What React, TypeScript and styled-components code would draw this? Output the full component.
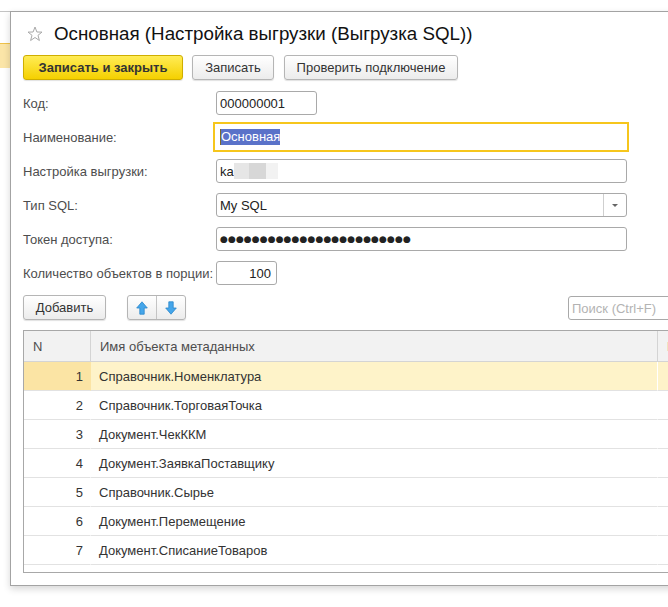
import styled, { createGlobalStyle } from 'styled-components'

const GlobalStyle = createGlobalStyle`
    html, body {
        margin: 0;
        padding: 0;
        background: #ffffff;
        overflow: hidden;
    }
    body {
        width: 668px;
        height: 607px;
        font-family: "Liberation Sans", Arial, sans-serif;
        font-size: 13px;
        color: #333333;
    }
`

const Desktop = styled.div`
    display: flex;
    align-items: flex-start;
    width: 668px;
    height: 607px;
    overflow: hidden;
`

const BackStrip = styled.div`
    flex-shrink: 0;
    width: 10px;
    margin-top: 11px;
    border-top: 1px solid #c4c4c4;
    display: flex;
    flex-direction: column;
`

const BackSpacer = styled.div`
    height: 31px;
`

const BackSelected = styled.div`
    height: 24px;
    background: #fbe5a8;
    border-top: 1px solid #efc24a;
`

const Window = styled.div`
    flex-shrink: 0;
    box-sizing: border-box;
    width: 721px;
    height: 575px;
    margin-top: 11px;
    padding: 0 12px 12px 12px;
    background: #ffffff;
    border: 1px solid #a3a3a3;
    box-shadow: 0 3px 7px rgba(0, 0, 0, 0.16);
    display: flex;
    flex-direction: column;
`

const Header = styled.div`
    height: 43px;
    display: flex;
    align-items: center;
    padding-left: 4px;
    gap: 11px;
`

const Title = styled.h1`
    margin: 0;
    font-size: 18.75px;
    font-weight: normal;
    color: #111111;
    white-space: nowrap;
`

const ButtonBar = styled.div`
    display: flex;
    height: 25px;
    gap: 9px;
`

const Button = styled.button<{ $w: number; $primary?: boolean }>`
    box-sizing: border-box;
    width: ${p => p.$w}px;
    height: 25px;
    padding: 0;
    font-family: inherit;
    font-size: 13px;
    font-weight: ${p => (p.$primary ? 'bold' : 'normal')};
    color: #333333;
    border-radius: 3px;
    border: 1px solid ${p => (p.$primary ? '#cfae00' : '#b5b5b5')};
    background: ${p => (p.$primary
        ? 'linear-gradient(#ffec55, #f5d000)'
        : 'linear-gradient(#ffffff, #ececec)')};
    box-shadow: 0 1px 1px rgba(0, 0, 0, 0.12);
    display: flex;
    align-items: center;
    justify-content: center;
    white-space: nowrap;
`

const Form = styled.div`
    margin-top: 11px;
    display: flex;
    flex-direction: column;
    gap: 10px;
`

const Row = styled.div`
    height: 24px;
    display: flex;
    align-items: center;
`

const Label = styled.span`
    flex-shrink: 0;
    width: 193px;
    color: #4d4d4d;
    white-space: nowrap;
`

const Field = styled.div<{ $w: number; $right?: boolean }>`
    box-sizing: border-box;
    width: ${p => p.$w}px;
    height: 24px;
    border: 1px solid #a9a9a9;
    border-radius: 3px;
    padding: 0 5px 0 3px;
    display: flex;
    align-items: center;
    justify-content: ${p => (p.$right ? 'flex-end' : 'flex-start')};
    color: #222222;
    background: #ffffff;
    overflow: hidden;
`

const FocusedField = styled.div`
    box-sizing: border-box;
    width: 416px;
    height: 30px;
    margin: -3px 0 -3px -3px;
    border: 2px solid #f6c61c;
    padding-left: 5px;
    display: flex;
    align-items: center;
    background: #ffffff;
`

const Selected = styled.span`
    background: #5a72c9;
    color: #ffffff;
    line-height: 16px;
    border-left: 1px solid #7c6a2a;
`

const Blur = styled.span<{ $w: number; $c: string }>`
    display: inline-block;
    width: ${p => p.$w}px;
    height: 16px;
    background: ${p => p.$c};
`

const Dots = styled.span`
    font-family: "DejaVu Sans", sans-serif;
    font-size: 9px;
    letter-spacing: 0.1px;
    color: #222222;
    white-space: nowrap;
`

const SelectField = styled(Field)`
    padding-right: 0;
`

const SelectValue = styled.span`
    flex: 1;
`

const SelectButton = styled.span`
    width: 22px;
    height: 100%;
    border-left: 1px solid #cfcfcf;
    display: flex;
    align-items: center;
    justify-content: center;
`

const Caret = styled.span`
    width: 0;
    height: 0;
    border-left: 3px solid transparent;
    border-right: 3px solid transparent;
    border-top: 3px solid #666666;
`

const Toolbar = styled.div`
    margin-top: 10px;
    height: 25px;
    display: flex;
    align-items: center;
`

const ArrowGroup = styled.div`
    box-sizing: border-box;
    margin-left: 21px;
    width: 59px;
    height: 25px;
    display: flex;
    border: 1px solid #b5b5b5;
    border-radius: 3px;
    background: linear-gradient(#ffffff, #ececec);
    box-shadow: 0 1px 1px rgba(0, 0, 0, 0.12);
`

const ArrowButton = styled.span<{ $divider?: boolean }>`
    flex: 1;
    display: flex;
    align-items: center;
    justify-content: center;
    border-left: ${p => (p.$divider ? '1px solid #c4c4c4' : 'none')};
`

const Search = styled.div`
    box-sizing: border-box;
    margin-left: auto;
    width: 150px;
    height: 24px;
    margin-top: 1px;
    border: 1px solid #a9a9a9;
    border-radius: 3px;
    padding-left: 3px;
    display: flex;
    align-items: center;
    color: #b3b3b3;
`

const Table = styled.div`
    box-sizing: border-box;
    margin-top: 10px;
    height: 243px;
    border: 1px solid #a8a8a8;
    display: grid;
    grid-template-columns: 67px 567px 1fr;
    grid-auto-rows: 29px;
    grid-template-rows: 31px;
    align-content: start;
    overflow: hidden;
`

const HeadCell = styled.div<{ $last?: boolean }>`
    box-sizing: border-box;
    background: #f2f2f2;
    border-bottom: 1px solid #d4d4d4;
    border-right: ${p => (p.$last ? 'none' : '1px solid #d4d4d4')};
    padding-left: 9px;
    display: flex;
    align-items: center;
    color: #4d4d4d;
    white-space: nowrap;
    overflow: hidden;
`

const Cell = styled.div<{ $bg: string; $num?: boolean; $sep?: boolean }>`
    box-sizing: border-box;
    background: ${p => p.$bg};
    border-bottom: 1px solid #e2e2e2;
    border-right: 1px solid ${p => (p.$sep ? '#ffffff' : 'transparent')};
    display: flex;
    align-items: center;
    justify-content: ${p => (p.$num ? 'flex-end' : 'flex-start')};
    padding: ${p => (p.$num ? '0 7px 0 0' : '0 0 0 8px')};
    color: #333333;
    white-space: nowrap;
`

const StarIcon = () => (
    <svg width="16" height="16" viewBox="0 0 16 16">
        <polygon
            points="8,1 9.9,6 15,6.1 11,9.3 12.4,14.5 8,11.5 3.6,14.5 5,9.3 1,6.1 6.1,6"
            fill="none"
            stroke="#a9a9a9"
            strokeWidth="1"
            strokeLinejoin="round"
        />
    </svg>
)

const ArrowIcon = ({ down }: { down?: boolean }) => (
    <svg width="12" height="14" viewBox="0 0 12 14" style={{ transform: down ? 'rotate(180deg)' : undefined }}>
        <path d="M6 0.8 L11.3 7 H8.2 V13.2 H3.8 V7 H0.7 Z" fill="#45a6ea" stroke="#2a86cc" strokeWidth="0.8" strokeLinejoin="round" />
    </svg>
)

const items = [
    'Справочник.Номенклатура',
    'Справочник.ТорговаяТочка',
    'Документ.ЧекККМ',
    'Документ.ЗаявкаПоставщику',
    'Справочник.Сырье',
    'Документ.Перемещение',
    'Документ.СписаниеТоваров',
]

export default function App() {
    return (
        <>
            <GlobalStyle />
            <Desktop>
                <BackStrip>
                    <BackSpacer />
                    <BackSelected />
                </BackStrip>
                <Window>
                    <Header>
                        <StarIcon />
                        <Title>Основная (Настройка выгрузки (Выгрузка SQL))</Title>
                    </Header>
                    <ButtonBar>
                        <Button $w={160} $primary>Записать и закрыть</Button>
                        <Button $w={82}>Записать</Button>
                        <Button $w={174} style={{ marginLeft: 1 }}>Проверить подключение</Button>
                    </ButtonBar>
                    <Form>
                        <Row>
                            <Label>Код:</Label>
                            <Field $w={101}>000000001</Field>
                        </Row>
                        <Row>
                            <Label>Наименование:</Label>
                            <FocusedField><Selected>Основная</Selected></FocusedField>
                        </Row>
                        <Row>
                            <Label>Настройка выгрузки:</Label>
                            <Field $w={411}>
                                ka
                                <Blur $w={15} $c="#e6e6e6" />
                                <Blur $w={17} $c="#d7d7d7" />
                                <Blur $w={12} $c="#f2f2f2" />
                            </Field>
                        </Row>
                        <Row>
                            <Label>Тип SQL:</Label>
                            <SelectField $w={411}>
                                <SelectValue>My SQL</SelectValue>
                                <SelectButton><Caret /></SelectButton>
                            </SelectField>
                        </Row>
                        <Row>
                            <Label>Токен доступа:</Label>
                            <Field $w={411}><Dots>{'●'.repeat(24)}</Dots></Field>
                        </Row>
                        <Row>
                            <Label>Количество объектов в порции:</Label>
                            <Field $w={61} $right>100</Field>
                        </Row>
                    </Form>
                    <Toolbar>
                        <Button $w={83}>Добавить</Button>
                        <ArrowGroup>
                            <ArrowButton><ArrowIcon /></ArrowButton>
                            <ArrowButton $divider><ArrowIcon down /></ArrowButton>
                        </ArrowGroup>
                        <Search>Поиск (Ctrl+F)</Search>
                    </Toolbar>
                    <Table>
                        <HeadCell>N</HeadCell>
                        <HeadCell>Имя объекта метаданных</HeadCell>
                        <HeadCell $last>Пометка</HeadCell>
                        {items.map((name, i) => {
                            const active = i === 0
                            return [
                                <Cell key={`n${i}`} $num $bg={active ? '#fbe4a4' : '#ffffff'}>{i + 1}</Cell>,
                                <Cell key={`m${i}`} $sep={active} $bg={active ? '#fef3c9' : '#ffffff'}>{name}</Cell>,
                                <Cell key={`x${i}`} $bg={active ? '#fef3c9' : '#ffffff'} />,
                            ]
                        })}
                    </Table>
                </Window>
            </Desktop>
        </>
    )
}
